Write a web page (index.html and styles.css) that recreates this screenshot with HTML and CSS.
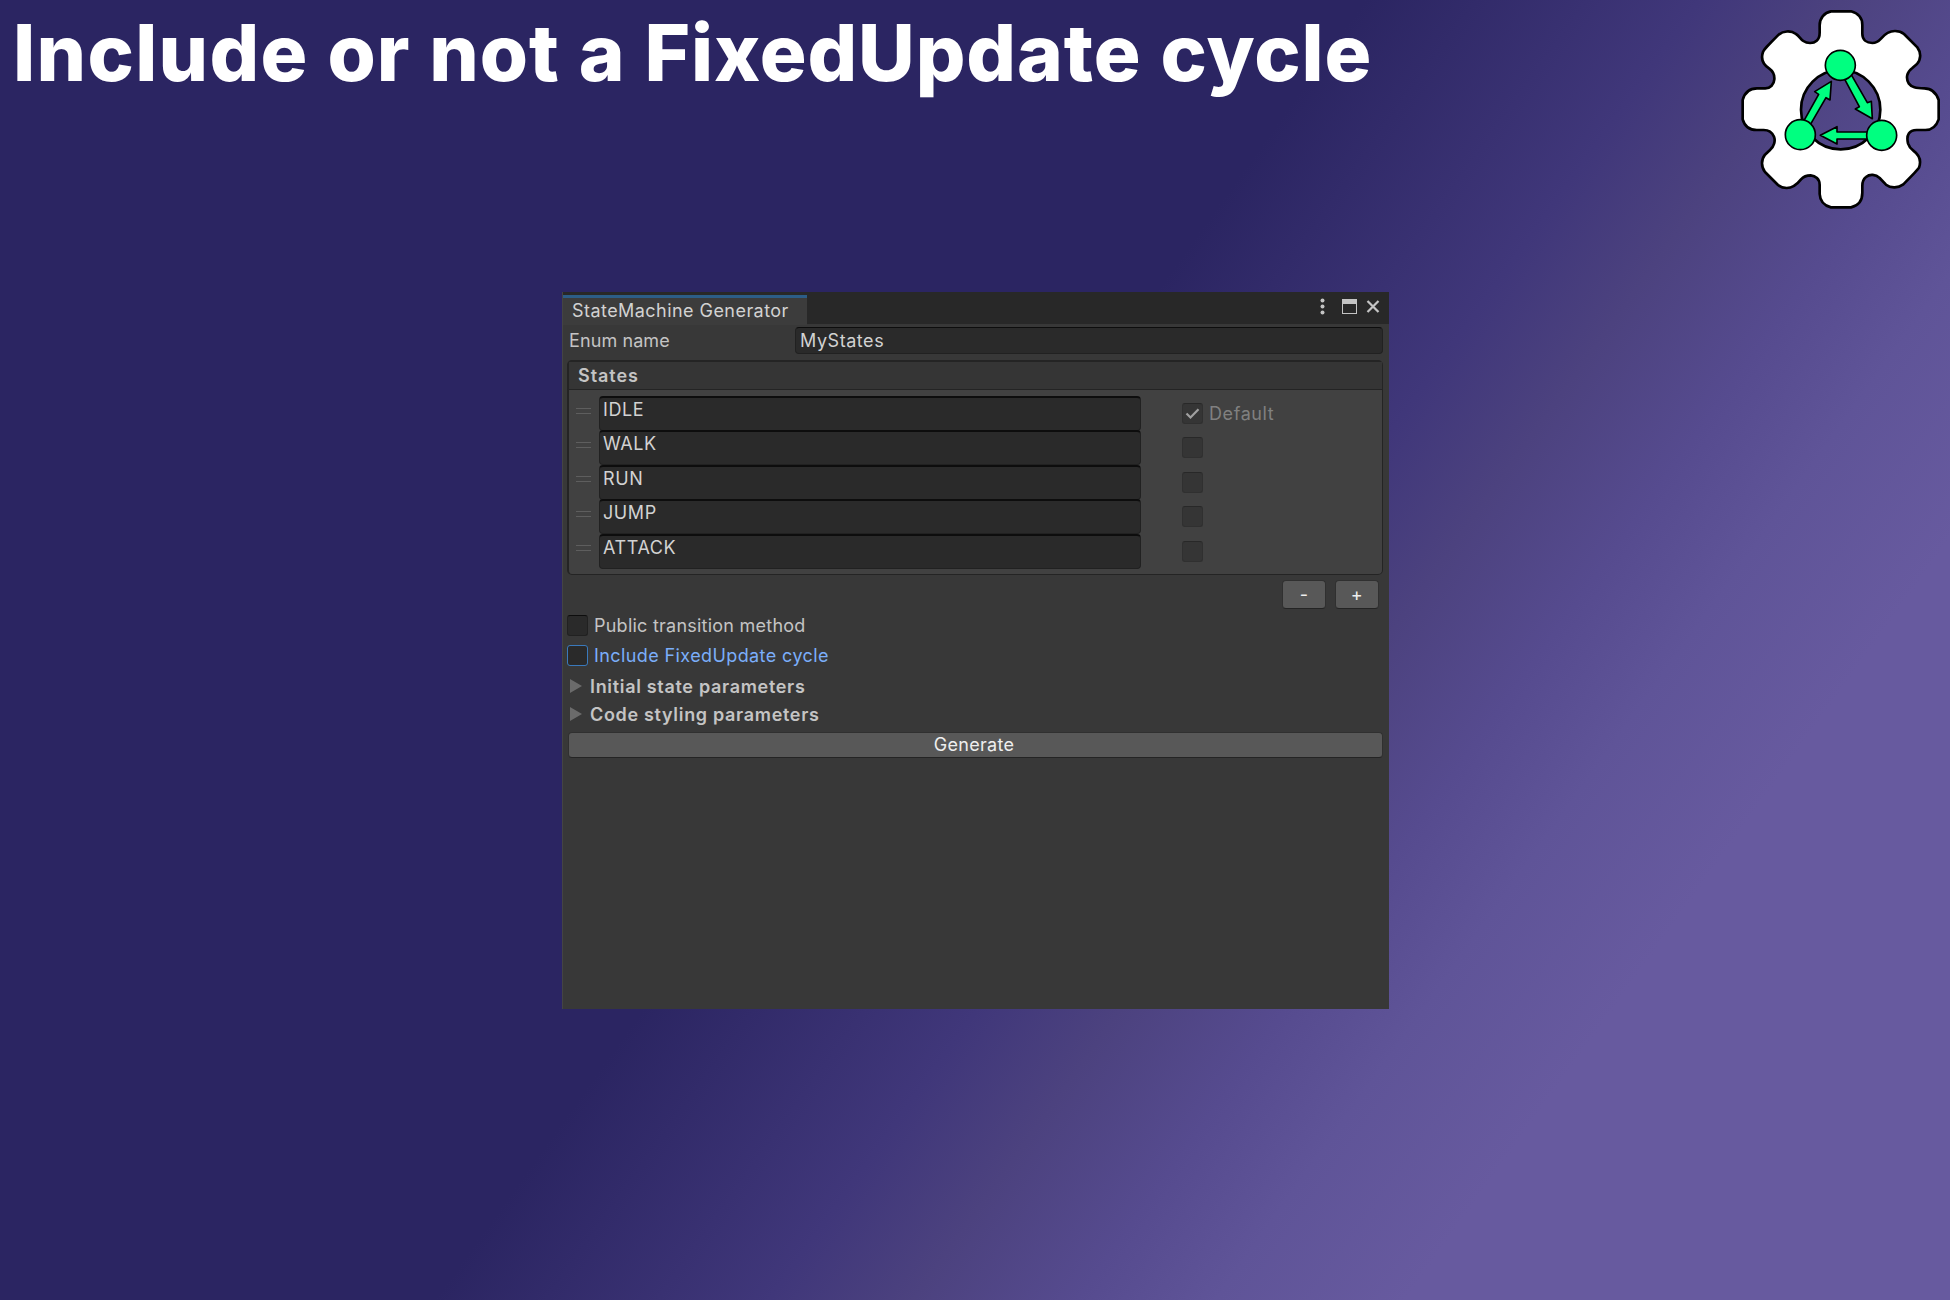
FILE: index.html
```
<!DOCTYPE html>
<html lang="en">
<head>
<meta charset="utf-8">
<title>StateMachine Generator</title>
<link rel="stylesheet" href="styles.css">
</head>
<body>
<header class="header">
  <h1 class="title"><span class="lead">Include</span> or not a FixedUpdate cycle</h1>
  <svg class="logo" width="220" height="220" viewBox="0 0 660 660">
    <g stroke="#000" stroke-linejoin="round">
      <path fill="#fff" fill-rule="evenodd" stroke-width="8" d="M303 34H363C385 40 397 54 397 75V101C397 121 411 129 427 129C438 129 445 125 453 116C467 99 480 93 495 93C506 93 515 96 522 102L562 142C574 158 573 178 561 192L547 204C530 216 527 235 536 250C545 262 557 265 583 265C604 265 618 276 626 300V358C619 379 606 390 586 390H560C538 390 528 405 534 430C537 440 542 446 550 452C569 466 574 484 567 503C563 510 555 518 520 553C505 564 483 566 468 554L449 534C437 523 420 521 408 531C399 538 397 546 397 557V578C397 603 384 617 363 622H303C283 617 270 603 269 582V554C269 537 256 527 242 526C230 526 221 529 213 538C198 557 186 564 170 564C160 564 150 560 144 555L105 516C93 501 93 479 105 464L120 450C132 440 137 422 132 410C126 396 118 390 101 390H80C58 390 44 379 38 358V300C44 277 60 265 81 265H106C121 265 132 253 133 238C134 224 129 214 118 206C98 193 92 176 99 156C103 147 108 142 146 104C159 93 182 90 198 102C207 107 211 117 220 123C232 131 250 131 260 122C268 115 269 109 269 98V76C269 54 283 38 303 34ZM332 210A119 119 0 1 0 332 448A119 119 0 1 0 332 210Z"/>
      <g fill="#00ff80" stroke-width="5">
        <path d="M341 232L362 221L412 308L424 304L427 356L376 327L388 320Z"/>
        <path d="M415 396H321V380L271 406L321 432V417H415Z"/>
        <path d="M222 362L266 283L254 275L304 244L300 300L288 293L241 374Z"/>
        <circle cx="331" cy="196" r="45"/>
        <circle cx="455" cy="406" r="45"/>
        <circle cx="211" cy="404" r="45"/>
      </g>
    </g>
  </svg>
</header>
<main class="window">
  <div class="tabbar">
    <div class="tab">StateMachine Generator</div>
    <svg class="controls" width="64" height="24" viewBox="0 0 64 24">
      <g fill="#c4c4c4">
        <circle cx="4.500" cy="5.500" r="2"/><circle cx="4.500" cy="11.500" r="2"/><circle cx="4.500" cy="17.500" r="2"/>
        <path fill-rule="evenodd" d="M24 4H39V19H24ZM25 9V18H38V9Z"/>
      </g>
      <path d="M49.500 6L60.500 17M60.500 6L49.500 17" stroke="#c4c4c4" stroke-width="2.200" fill="none"/>
    </svg>
  </div>
  <div class="field-row">
    <label class="label">Enum name</label>
    <div class="input">MyStates</div>
  </div>
  <section class="states">
    <div class="states-head">States</div>
    <div class="rows">
      <div class="row"><i class="grip"></i><div class="input state">IDLE</div><span class="check off"><svg width="21" height="21" viewBox="0 0 21 21"><path d="M4.500 10.500L8.500 14.500L16.500 6.200" fill="none" stroke="#a0a0a0" stroke-width="2.200"/></svg></span><span class="default">Default</span></div>
      <div class="row"><i class="grip"></i><div class="input state">WALK</div><span class="check off"></span></div>
      <div class="row"><i class="grip"></i><div class="input state">RUN</div><span class="check off"></span></div>
      <div class="row"><i class="grip"></i><div class="input state">JUMP</div><span class="check off"></span></div>
      <div class="row"><i class="grip"></i><div class="input state">ATTACK</div><span class="check off"></span></div>
    </div>
  </section>
  <div class="buttons"><div class="btn small">-</div><div class="btn small">+</div></div>
  <div class="toggle"><span class="check"></span><span class="public">Public transition method</span></div>
  <div class="toggle focus"><span class="check"></span>Include FixedUpdate cycle</div>
  <div class="foldouts">
    <div class="foldout"><i class="arrow"></i>Initial state parameters</div>
    <div class="foldout"><i class="arrow"></i>Code styling parameters</div>
  </div>
  <div class="btn generate">Generate</div>
</main>
</body>
</html>
```
FILE: styles.css
```
* { box-sizing: border-box; }
body {
  margin: 0;
  width: 1950px;
  height: 1300px;
  overflow: hidden;
  display: flex;
  flex-direction: column;
  background: linear-gradient(125.6deg, #2b2562 47.4%, #40377a 59%, #4c427f 64%, #564b8f 69.7%, #5f5498 74.5%, #675a9f 81.1%);
  font-family: Inter, sans-serif;
  font-size: 18px;
  font-weight: 375;
  letter-spacing: 0.45px;
  color: #c4c4c4;
}
.header { display: flex; justify-content: space-between; height: 292px; }
.title {
  margin: 0;
  padding: 0 0 0 13px;
  height: 110px;
  line-height: 106px;
  font-family: Inter, sans-serif;
  font-weight: 800;
  font-size: 78px;
  letter-spacing: 0.9px;
  word-spacing: 1px;
  white-space: nowrap;
  color: #fff;
}
.lead { letter-spacing: 1.3px; }
.logo { flex: none; }
.window {
  width: 827px;
  height: 717px;
  margin-left: 562px;
  background: #383838;
  border-left: 1px solid #444;
}
.tabbar { display: flex; justify-content: space-between; height: 32px; background: #282828; padding-top: 3px; }
.tab {
  width: 244px;
  height: 30px;
  padding-left: 9px;
  line-height: 26px;
  background: #3c3c3c;
  border-top: 3px solid #2c5d87;
  color: #d2d2d2;
}
.controls { margin: 0 7px 0 0; }
.field-row { display: flex; height: 38px; padding: 3px 6px 0 6px; }
.label { width: 226px; line-height: 27px; letter-spacing: 0.1px; }
.input {
  height: 27px;
  padding-left: 4px;
  line-height: 25px;
  background: #2a2a2a;
  border: 1px solid #212121;
  border-top-color: #0d0d0d;
  border-radius: 4px;
  color: #d2d2d2;
}
.field-row .input { flex: 1; letter-spacing: 0.55px; }
.states { height: 215px; margin: -2px 6px 0 4px; border: 2px solid #242424; border-width: 2px 1px 1px 2px; border-radius: 5px; background: #414141; }
.states-head { height: 28px; padding-left: 9px; line-height: 27px; font-weight: 600; letter-spacing: 0.95px; background: #353535; border-bottom: 1px solid #242424; }
.rows { padding-top: 6px; }
.row { display: flex; height: 34.400px; padding-left: 7px; }
.grip { flex: none; width: 15px; height: 6px; margin: 11.500px 8px 0 0; border: solid #5e5e5e; border-width: 1px 0; }
.input.state { width: 542px; height: 35px; padding-left: 3px; line-height: 23px; border-top-width: 2px; letter-spacing: 0.6px; }
.check { flex: none; width: 21px; height: 21px; background: #2a2a2a; border: 1px solid #212121; border-top-color: #0d0d0d; border-radius: 3px; }
.check svg { display: block; margin: -1px; }
.row .check { margin: 7px 0 0 41px; }
.check.off { background: #353535; border-color: #303030; border-top-color: #282828; }
.default { margin-left: 6px; line-height: 35px; color: #808080; letter-spacing: 0.6px; }
.buttons { display: flex; justify-content: flex-end; gap: 9px; height: 35px; padding: 5px 10px 0 0; }
.btn { background: #585858; border: 1px solid #303030; border-bottom-color: #242424; border-radius: 4px; color: #eee; text-align: center; }
.small { width: 44px; height: 29px; line-height: 28px; }
.toggle { display: flex; gap: 6px; height: 30px; padding: 5px 0 0 4px; line-height: 21px; letter-spacing: 0.4px; }
.public { letter-spacing: 0.24px; }
.focus { color: #7baefa; }
.focus .check { border-color: #3a79bb; }
.foldouts { padding-top: 2px; }
.foldout { display: flex; align-items: center; height: 28px; padding-left: 7px; font-weight: 600; letter-spacing: 0.68px; }
.arrow { width: 12px; height: 14px; margin-right: 8px; background: #6b6b6b; clip-path: polygon(0 0, 100% 50%, 0 100%); }
.generate { height: 26px; margin: 4px 6px 0 5px; padding-right: 3px; line-height: 24px; letter-spacing: 0.3px; }
```
